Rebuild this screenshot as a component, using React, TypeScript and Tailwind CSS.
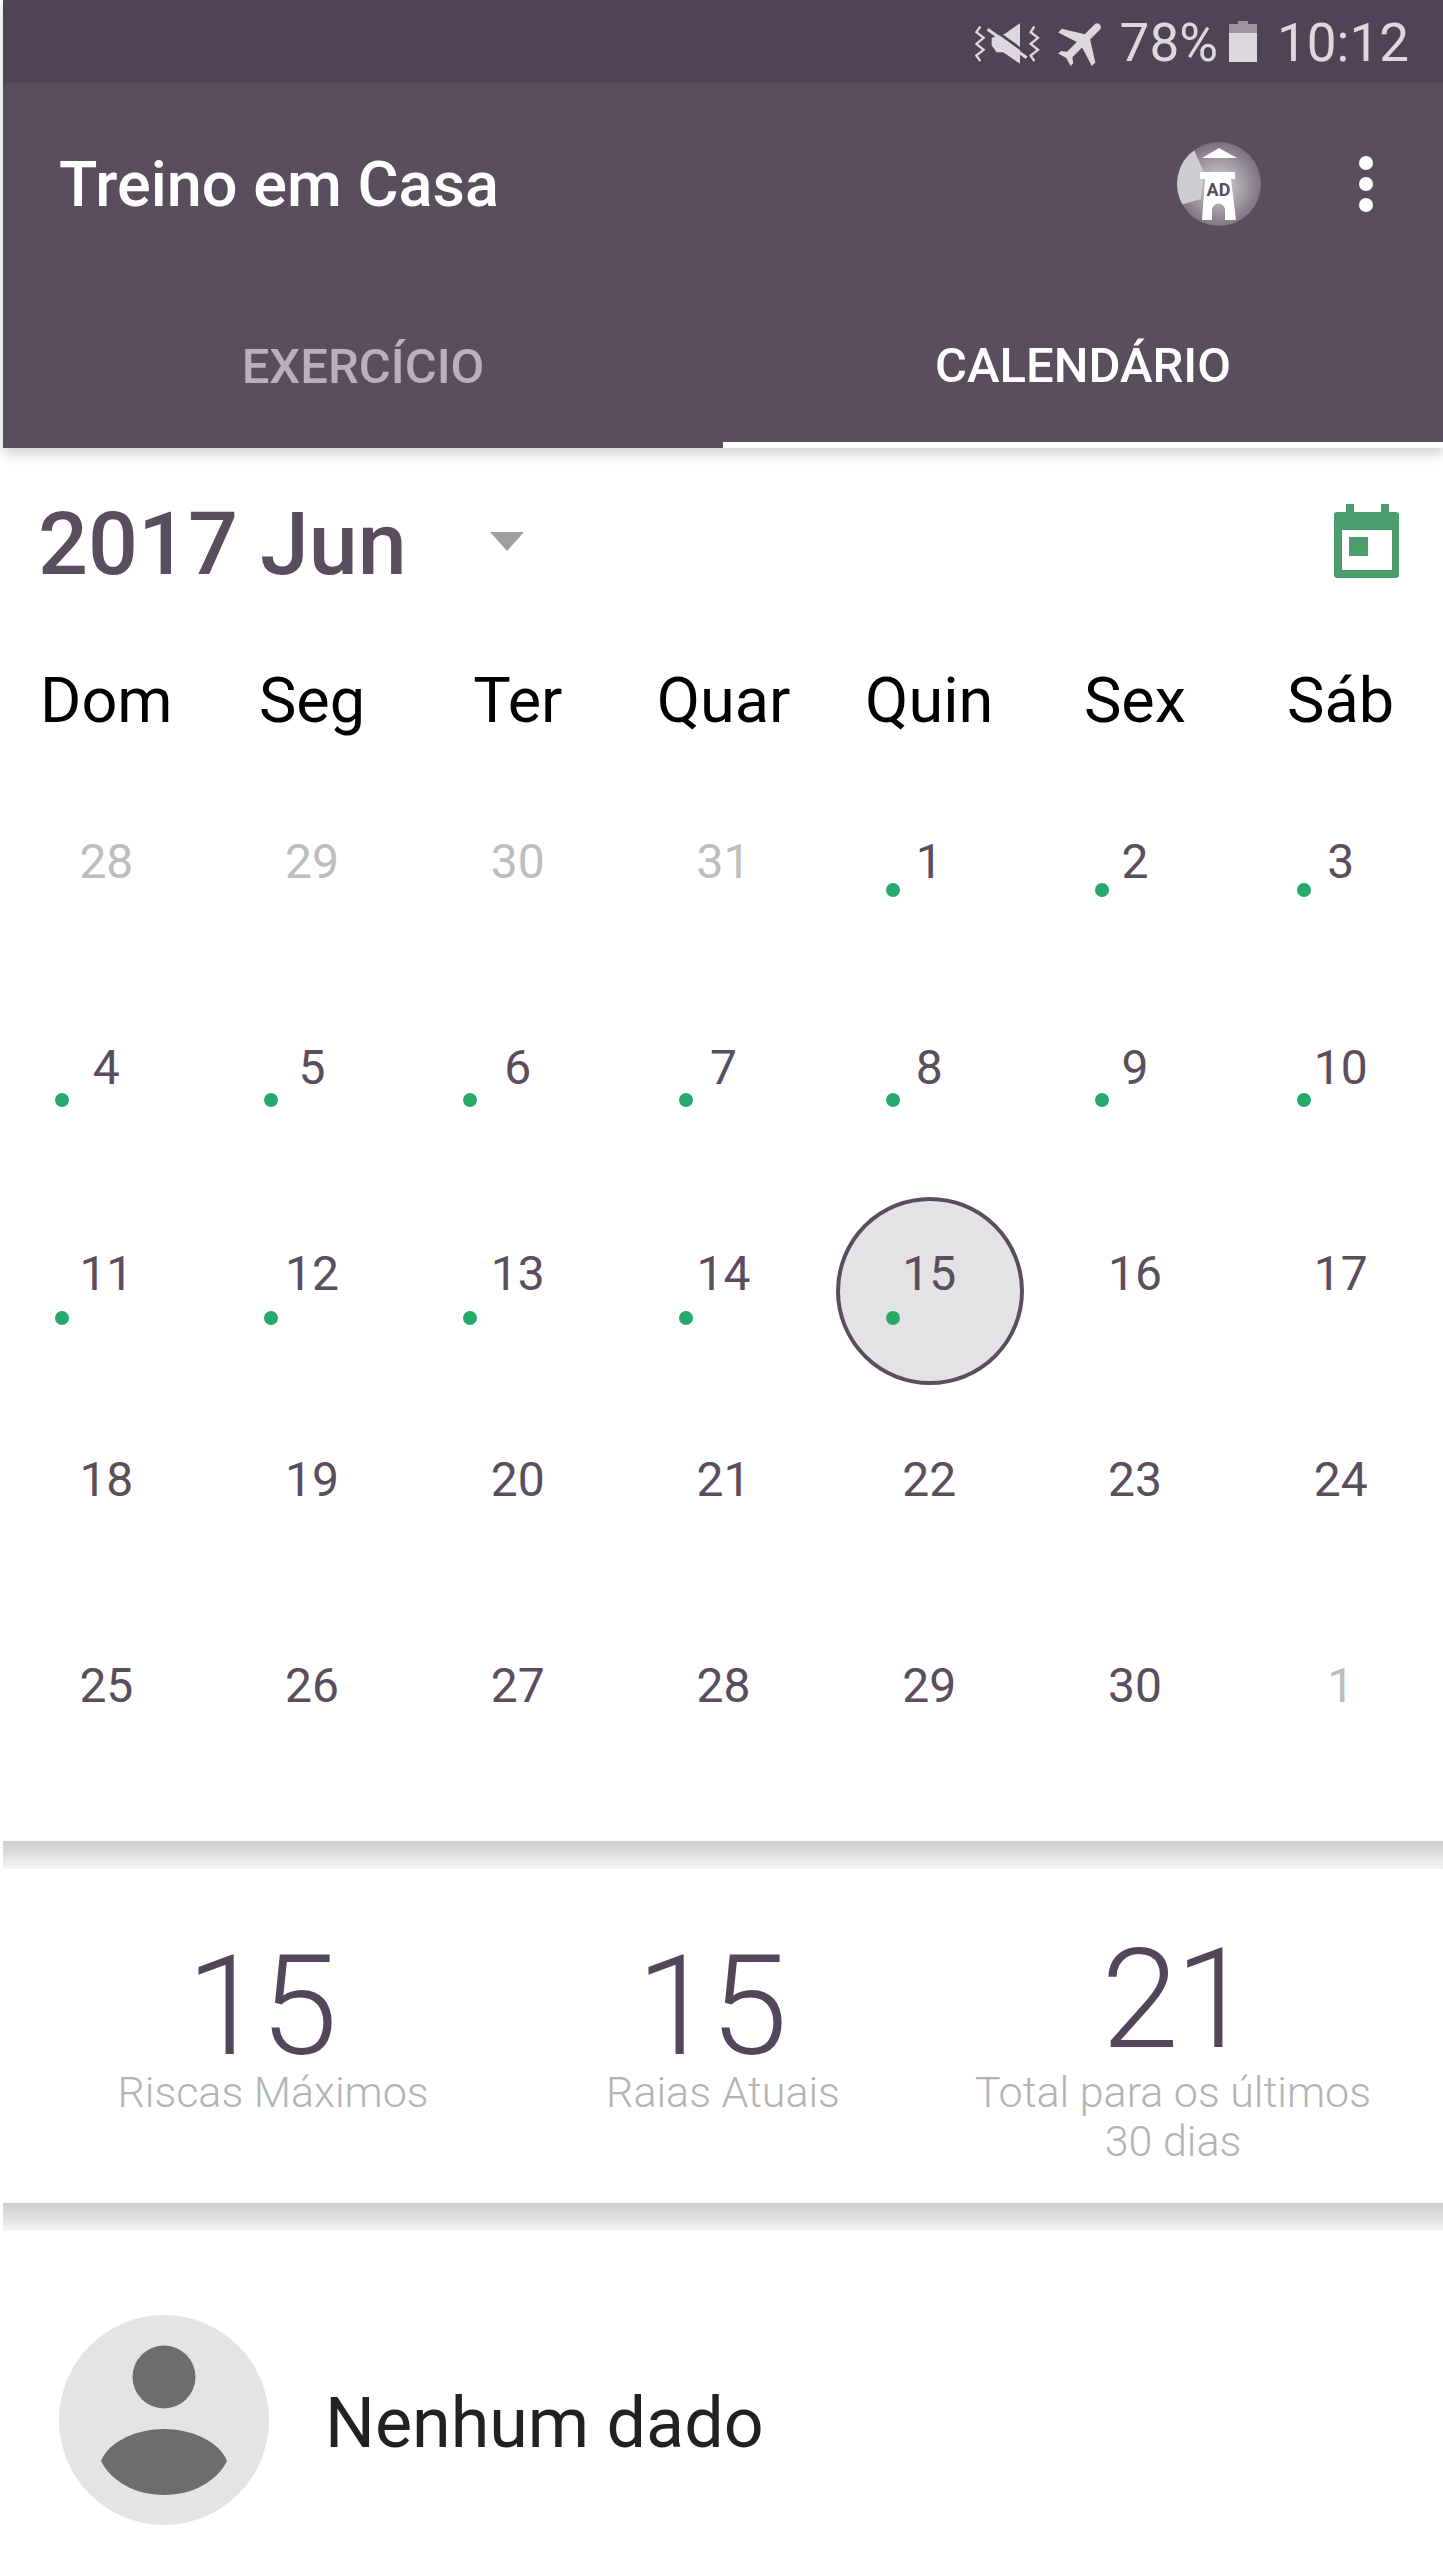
import React from 'react';

const weeks = [
  [28, 29, 30, 31, 1, 2, 3],
  [4, 5, 6, 7, 8, 9, 10],
  [11, 12, 13, 14, 15, 16, 17],
  [18, 19, 20, 21, 22, 23, 24],
  [25, 26, 27, 28, 29, 30, 1],
];
const dayNames = ['Dom', 'Seg', 'Ter', 'Quar', 'Quin', 'Sex', 'Sáb'];
const dotLeft = ['left-[52px]', 'left-[55px]', 'left-[49px]', 'left-[59px]', 'left-[60px]', 'left-[63px]', 'left-[60px]'];
const dotTop = ['top-[124px]', 'top-[128px]', 'top-[140px]'];

const hasDot = (row: number, col: number) =>
  (row === 0 && col >= 4) || row === 1 || (row === 2 && col <= 4);
const isMuted = (row: number, col: number) =>
  (row === 0 && col <= 3) || (row === 4 && col === 6);

const MuteVibrateIcon = () => (
  <svg width="65" height="42" viewBox="40 65 195 125" fill="none">
    <path d="M56 78 L44 95 L66 112 L44 130 L66 148 L44 165 L56 182" stroke="#dcd8dd" strokeWidth="7" />
    <path d="M218 78 L207 95 L229 112 L207 130 L229 148 L207 165 L218 182" stroke="#dcd8dd" strokeWidth="7" />
    <path d="M175 68 V190 L125 155 H105 L90 135 V112 L130 100 Z" fill="#dcd8dd" />
    <path d="M84 78 L200 162" stroke="#504355" strokeWidth="8" />
    <path d="M78 86 L195 172" stroke="#dcd8dd" strokeWidth="9" />
  </svg>
);

const PlaneIcon = () => (
  <svg width="60" height="60" viewBox="0 0 24 24" fill="#dcd8dd">
    <path
      transform="rotate(45 12 12)"
      d="M21 16v-2l-8-5V3.5c0-.83-.67-1.5-1.5-1.5S10 2.67 10 3.5V9l-8 5v2l8-2.5V19l-2 1.5V22l3.5-1 3.5 1v-1.5L13 19v-5.5l8 2.5z"
    />
  </svg>
);

const AdIcon = () => (
  <svg width="84" height="84" viewBox="0 0 84 84">
    <defs>
      <radialGradient id="adGlow" cx="50%" cy="52%" r="52%">
        <stop offset="0%" stopColor="#d8d5da" />
        <stop offset="100%" stopColor="#7b6f7e" />
      </radialGradient>
      <clipPath id="adClip">
        <circle cx="42" cy="42" r="42" />
      </clipPath>
    </defs>
    <circle cx="42" cy="42" r="42" fill="url(#adGlow)" />
    <polygon points="16,6 27,30 24,57 0,64 0,6" fill="#cfccd1" clipPath="url(#adClip)" />
    <polygon points="25,16 42,6 60,16" fill="#fff" />
    <path d="M23 30 H58 V37 H54 L59 78 H48 V68 A6.5 6.5 0 0 0 35 68 V78 H25 L28 37 H23 Z" fill="#fff" />
    <text x="41.5" y="54" textAnchor="middle" fontSize="18" fontWeight="700" fill="#5a4d5d" fontFamily="Roboto, sans-serif">AD</text>
  </svg>
);

const CalendarIcon = () => (
  <svg width="65" height="74" viewBox="0 0 65 74" fill="none">
    <rect x="12" y="0" width="8" height="10" fill="#4b9d6e" />
    <rect x="47" y="0" width="8" height="10" fill="#4b9d6e" />
    <rect x="0" y="8" width="65" height="66" rx="3" fill="#4b9d6e" />
    <rect x="8" y="26" width="50" height="40" fill="#fff" />
    <rect x="15" y="33" width="19" height="19" fill="#4b9d6e" />
  </svg>
);

const PersonAvatar = () => (
  <svg width="210" height="210" viewBox="0 0 210 210">
    <circle cx="105" cy="105" r="105" fill="#e4e4e4" />
    <circle cx="105" cy="62" r="31.5" fill="#6d6d6d" />
    <path d="M42 146 C50 126 78 114 105 114 C132 114 160 126 168 146 C158 166 134 180 105 180 C76 180 52 166 42 146 Z" fill="#6d6d6d" />
  </svg>
);

const ShadowBand = () => (
  <div className="h-[28px] bg-linear-to-b from-[#cdcdcd] to-[#f4f4f4]" />
);

const Stat = ({ value, label, numberClass }: { value: string; label: React.ReactNode; numberClass: string }) => (
  <div className="flex flex-col items-center">
    <div className={`text-[140px] leading-[100px] font-light tracking-[-4px] text-[#54465a] ${numberClass}`}>{value}</div>
    <div className="text-center text-[43px] leading-[49px] font-light text-[#b3b3b3]">{label}</div>
  </div>
);

export default function App() {
  return (
    <div className="w-[1443px] h-[2560px] overflow-hidden bg-white pl-[3px] font-['Roboto',sans-serif]">
      <header className="relative z-10 bg-[#5a4d5d] shadow-[0_6px_12px_rgba(0,0,0,0.18)]">
        <div className="flex h-[83px] items-center justify-end bg-[#504355] pr-[34px] pt-[5px] text-[53px] text-[#dcd8dd]">
          <div className="-mt-[2px]"><MuteVibrateIcon /></div>
          <div className="ml-[13px] -mt-[3px]"><PlaneIcon /></div>
          <span className="ml-[7px]">78%</span>
          <div className="relative ml-[11px] -mt-[3px] h-[38px] w-[28px] bg-[#dcd8dd]">
            <div className="h-[9px] bg-[#9d94a0]" />
            <div className="absolute left-[9px] -top-[3px] h-[3px] w-[10px] bg-[#9d94a0]" />
          </div>
          <span className="ml-[20px]">10:12</span>
        </div>
        <div className="flex h-[202px] items-center pl-[56px]">
          <h1 className="flex-1 pt-[2px] text-[63px] font-medium text-white">Treino em Casa</h1>
          <AdIcon />
          <div className="ml-[98px] mr-[70px] flex flex-col gap-[7px]">
            <span className="h-[14px] w-[14px] rounded-full bg-white" />
            <span className="h-[14px] w-[14px] rounded-full bg-white" />
            <span className="h-[14px] w-[14px] rounded-full bg-white" />
          </div>
        </div>
        <div className="grid h-[163px] grid-cols-2 text-[49px] font-medium">
          <div className="flex items-center justify-center text-[#b8b0bb]">EXERCÍCIO</div>
          <div className="flex items-center justify-center border-b-[6px] border-white pt-[4px] text-white">CALENDÁRIO</div>
        </div>
      </header>

      <section>
        <div className="flex h-[192px] items-center pl-[35px] pr-[44px]">
          <span className="text-[88px] font-medium text-[#5a4d5d]">2017 Jun</span>
          <span className="ml-[83px] mb-[6px] h-0 w-0 border-x-[17px] border-t-[19px] border-x-transparent border-t-[#9e9e9e]" />
          <div className="ml-auto mb-[6px]"><CalendarIcon /></div>
        </div>
        <div className="grid h-[119px] grid-cols-7 pt-[4px] text-[63px] text-black">
          {dayNames.map((name) => (
            <div key={name} className="flex items-center justify-center pl-[1px]">{name}</div>
          ))}
        </div>
        <div className="grid grid-cols-7 pb-[52px]">
          {weeks.map((week, row) =>
            week.map((day, col) => (
              <div
                key={`${row}-${col}`}
                className={`relative flex h-[206px] items-center justify-center pl-[1px] text-[48px] ${isMuted(row, col) ? 'text-[#bdbdbd]' : 'text-[#5a4d5d]'}`}
              >
                {row === 2 && col === 4 && (
                  <span className="absolute left-[10px] top-[26px] h-[188px] w-[188px] rounded-full border-[4px] border-[#5a4d5d] bg-[#e3e2e4]" />
                )}
                <span className="relative">{day}</span>
                {hasDot(row, col) && (
                  <span className={`absolute h-[14px] w-[14px] rounded-full bg-[#27a96c] ${dotLeft[col]} ${dotTop[row]}`} />
                )}
              </div>
            )),
          )}
        </div>
      </section>

      <ShadowBand />

      <section className="grid h-[334px] grid-cols-3 px-[45px] pt-[87px]">
        <Stat value="15" label="Riscas Máximos" numberClass="pr-[26px] mb-[12px]" />
        <Stat value="15" label="Raias Atuais" numberClass="pr-[26px] mb-[12px]" />
        <Stat
          value="21"
          label={<>Total para os últimos<br />30 dias</>}
          numberClass="pl-[4px] mb-[19px] -mt-[7px]"
        />
      </section>

      <ShadowBand />

      <section className="flex items-center pl-[56px] pt-[84px]">
        <PersonAvatar />
        <span className="ml-[56px] pt-[6px] text-[70px] text-[#212121]">Nenhum dado</span>
      </section>
    </div>
  );
}
